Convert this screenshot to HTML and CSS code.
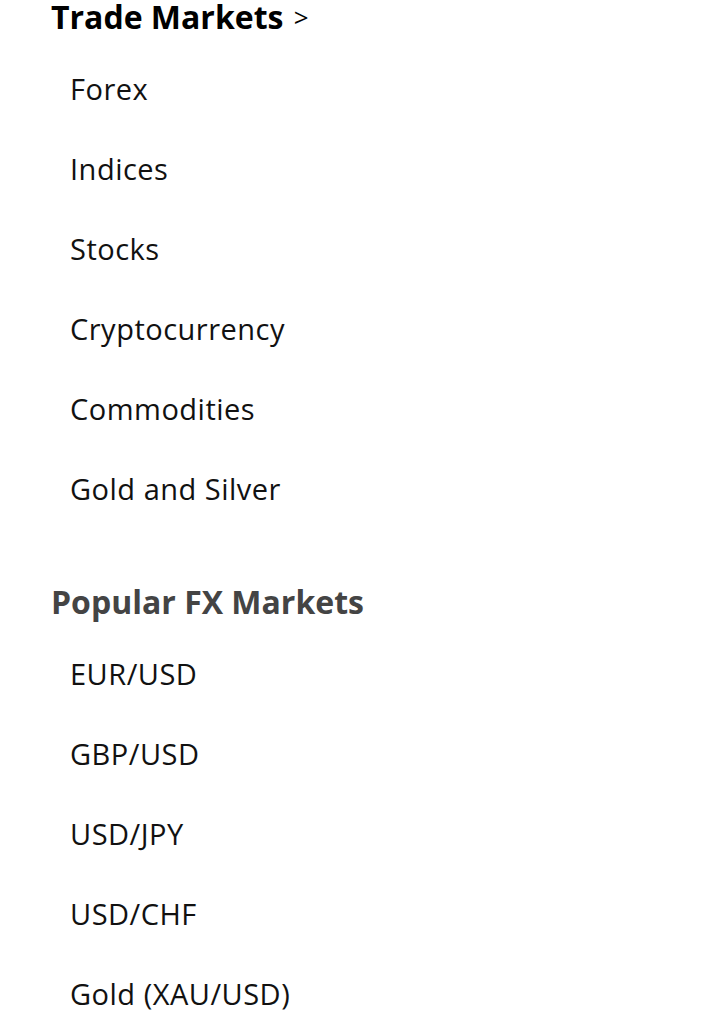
FILE: index.html
```html
<!DOCTYPE html>
<html lang="en">
<head>
<meta charset="utf-8">
<title>Markets</title>
<link rel="stylesheet" href="styles.css">
</head>
<body>
<nav class="menu">
  <section class="group">
    <h2 class="group-title">Trade Markets <span class="chev">&gt;</span></h2>
    <ul class="items">
      <li>Forex</li>
      <li>Indices</li>
      <li>Stocks</li>
      <li>Cryptocurrency</li>
      <li>Commodities</li>
      <li>Gold and Silver</li>
    </ul>
  </section>
  <section class="group second">
    <h2 class="group-title muted">Popular FX Markets</h2>
    <ul class="items">
      <li>EUR/USD</li>
      <li>GBP/USD</li>
      <li>USD/JPY</li>
      <li>USD/CHF</li>
      <li>Gold (XAU/USD)</li>
    </ul>
  </section>
</nav>
</body>
</html>
```

FILE: styles.css
```css
html, body {
  margin: 0;
  padding: 0;
  background: #fff;
}
body {
  font-family: "Open Sans", "DejaVu Sans", sans-serif;
  color: #111;
  overflow: hidden;
}
.menu {
  padding-left: 51px;
  margin-top: -3px;
}
.group-title {
  margin: 0;
  font-size: 32px;
  font-weight: 700;
  line-height: 40px;
  color: #000;
}
.group-title.muted {
  color: #444;
}
.chev {
  font-weight: 400;
  font-size: 26px;
  margin-left: 2px;
  vertical-align: 2px;
}
.items {
  list-style: none;
  margin: 12px 0 0;
  padding: 0 0 0 19px;
}
.items li {
  height: 80px;
  line-height: 80px;
  font-size: 29px;
  font-weight: 400;
  letter-spacing: 0.5px;
}
.second {
  margin-top: 53px;
}
```
